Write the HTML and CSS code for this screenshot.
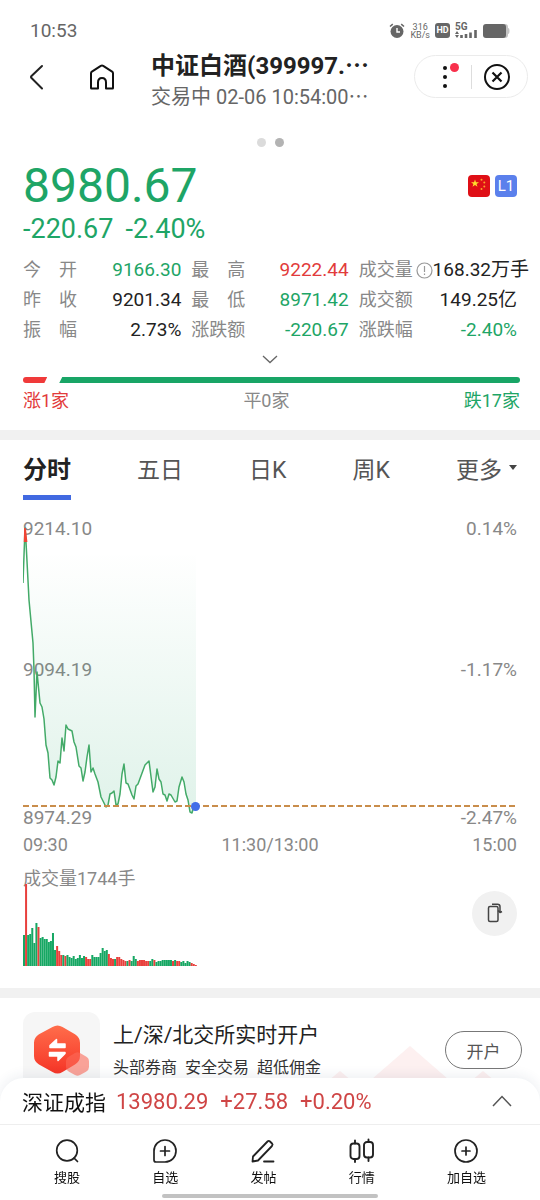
FILE: index.html
```html
<!DOCTYPE html>
<html lang="zh-CN">
<head>
	<meta charset="UTF-8">
	<meta name="viewport" content="width=device-width, initial-scale=1.0">
	<title>中证白酒</title>
	<link rel="stylesheet" href="styles.css">
</head>
<body>

	<div class="status-bar">
		<span class="time">10:53</span>
		<div class="status-icons">
			<svg width="16" height="16" viewBox="0 0 16 16">
				<circle cx="8" cy="8.500" r="6.500" fill="#666"/>
				<path d="M1 3.500L3.800 1.200M15 3.500L12.200 1.200" stroke="#666" stroke-width="1.600"/>
				<path d="M8 5v4h3" stroke="#fff" stroke-width="1.400" fill="none"/>
			</svg>
			<div class="speed"><span>316</span><span>KB/s</span></div>
			<span class="hd">HD</span>
			<div class="signal">
				<span>5G</span>
				<svg width="23" height="16" viewBox="0 0 23 16">
					<path d="M0 11l2-3 2 3zM0 12h4l-2 3z" fill="#666"/>
					<path d="M6.500 15v-3M11 15v-4M15.500 15v-5.500M20.500 15V7" stroke="#666" stroke-width="2.600"/>
				</svg>
			</div>
			<svg width="27" height="14" viewBox="0 0 27 14">
				<path d="M20 0h2q3 0 3 3v1q1.500 0 1.500 3T25 10v1q0 3-3 3h-2z" fill="#c4c4c4"/>
				<rect width="23" height="14" rx="3" fill="#666"/>
			</svg>
		</div>
	</div>

	<header class="header">
		<button class="icon-btn" aria-label="返回">
			<svg width="16" height="26" viewBox="0 0 16 26" fill="none" stroke="#222" stroke-width="2" stroke-linecap="round" stroke-linejoin="round"><path d="M14 2L3.500 12Q2.500 13 3.500 14L14 24.500"/></svg>
		</button>
		<button class="icon-btn home" aria-label="首页">
			<svg width="26" height="26" viewBox="0 0 26 26" fill="none" stroke="#111" stroke-width="2" stroke-linejoin="round"><path d="M2.500 24.500h6.500v-6q0-4.500 4-4.500t4 4.500v6h6.500q.5 0 .5-.5V9.200q0-1-.9-1.600L14.200 1.900q-1.200-.7-2.400 0L2.900 7.600q-.9.600-.9 1.600V24q0 .5.500.5z"/></svg>
		</button>
		<div class="title">
			<h1>中证白酒(399997.⋯</h1>
			<p>交易中 02-06 10:54:00⋯</p>
		</div>
		<div class="capsule">
			<button aria-label="更多选项">
				<svg width="24" height="28" viewBox="0 0 24 28"><g fill="#111"><circle cx="10" cy="5" r="2"/><circle cx="10" cy="14" r="2"/><circle cx="10" cy="23" r="2"/></g><circle cx="19.500" cy="4.500" r="4.500" fill="#f8304c"/></svg>
			</button>
			<i></i>
			<button aria-label="关闭">
				<svg width="28" height="28" viewBox="0 0 28 28" fill="none" stroke="#111" stroke-width="2"><circle cx="14" cy="14" r="12"/><path d="M9.500 9.500l9 9M18.500 9.500l-9 9" stroke-width="2.200"/></svg>
			</button>
		</div>
	</header>

	<div class="pager"><span></span><span class="on"></span></div>

	<section class="quote">
		<div class="price-row">
			<div class="price down">8980.67</div>
			<div class="badges">
				<svg width="22" height="22" viewBox="0 0 22 22">
					<rect width="22" height="22" rx="4" fill="#df0f16"/>
					<path d="M7 4.500l1 2.800h3l-2.400 1.700.9 2.800L7 10.100l-2.500 1.700.9-2.800L3 7.300h3z" fill="#fedf2c"/>
					<g fill="#f9a52a"><circle cx="13.500" cy="4.800" r="1"/><circle cx="16.300" cy="7.500" r="1"/><circle cx="16.300" cy="11.500" r="1"/><circle cx="13.500" cy="14" r="1"/></g>
				</svg>
				<span class="level">L1</span>
			</div>
		</div>
		<div class="change down"><span>-220.67</span><span>-2.40%</span></div>

		<dl class="stats">
			<div><dt><span>今</span><span>开</span></dt><dd class="down">9166.30</dd></div>
			<div><dt><span>最</span><span>高</span></dt><dd class="up">9222.44</dd></div>
			<div><dt>成交量</dt><dd class="wide"><svg width="17" height="17" viewBox="0 0 17 17" fill="none" stroke="#999" stroke-width="1.200"><circle cx="8.500" cy="8.500" r="7.500"/><path d="M8.500 4v6M8.500 11.500v1.500"/></svg>168.32万手</dd></div>
			<div><dt><span>昨</span><span>收</span></dt><dd>9201.34</dd></div>
			<div><dt><span>最</span><span>低</span></dt><dd class="down">8971.42</dd></div>
			<div><dt>成交额</dt><dd>149.25亿</dd></div>
			<div><dt><span>振</span><span>幅</span></dt><dd>2.73%</dd></div>
			<div><dt>涨跌额</dt><dd class="down">-220.67</dd></div>
			<div><dt>涨跌幅</dt><dd class="down">-2.40%</dd></div>
		</dl>

		<button class="expand" aria-label="展开">
			<svg width="16" height="9" viewBox="0 0 16 9" fill="none" stroke="#666" stroke-width="1.300"><path d="M1 1l7 6.500L15 1"/></svg>
		</button>

		<div class="breadth"><span class="bar-up"></span><span class="bar-down"></span></div>
		<div class="breadth-text"><span class="up">涨1家</span><span>平0家</span><span class="down">跌17家</span></div>
	</section>

	<section class="chart-box">
		<nav class="tabs">
			<button class="active">分时</button>
			<button>五日</button>
			<button>日K</button>
			<button>周K</button>
			<button>更多<i></i></button>
		</nav>

		<svg class="chart" viewBox="0 0 494 314">
			<defs>
				<linearGradient id="area" gradientUnits="userSpaceOnUse" x1="0" y1="35" x2="0" y2="298">
					<stop offset="0" stop-color="#1ea566" stop-opacity="0"/>
					<stop offset="1" stop-color="#1ea566" stop-opacity=".14"/>
				</linearGradient>
			</defs>
			<g class="axis">
				<text x="0" y="19">9214.10</text>
				<text x="0" y="160">9094.19</text>
				<text x="0" y="308">8974.29</text>
				<text x="494" y="19" text-anchor="end">0.14%</text>
				<text x="494" y="160" text-anchor="end">-1.17%</text>
				<text x="494" y="308" text-anchor="end">-2.47%</text>
			</g>
			<path id="fill" fill="url(#area)"/>
			<path id="line" fill="none" stroke="#43aa68" stroke-width="1.500" stroke-linejoin="round"/>
			<path d="M1.700 26L2 12L3.500 26" fill="none" stroke="#f04434" stroke-width="1.800"/>
			<path d="M0 290H494" stroke="#c98d4b" stroke-width="2" stroke-dasharray="6 3"/>
			<circle cx="172.500" cy="290.500" r="4.500" fill="#416ee8"/>
		</svg>
		<div class="times"><span>09:30</span><span>11:30/13:00</span><span>15:00</span></div>

		<div class="volume">
			<div class="volume-main">
				<p>成交量1744手</p>
				<svg id="bars" viewBox="0 0 400 83"></svg>
			</div>
			<button class="rotate" aria-label="横屏">
				<svg width="16" height="20" viewBox="0 0 16 20" fill="none" stroke="#444" stroke-width="1.500" stroke-linejoin="round"><rect x="1.500" y="3.500" width="9.500" height="15" rx="1.500"/><path d="M5 1.300h5.500q2.500 0 2.500 2.500v5M11 7.500l2 2 2-1"/></svg>
			</button>
		</div>
	</section>

	<section class="promo">
		<div class="promo-logo">
			<svg width="77" height="77" viewBox="0 0 77 77">
				<defs>
					<linearGradient id="hex" x1="0" y1="0" x2="0" y2="1"><stop offset="0" stop-color="#ff6d4b"/><stop offset="1" stop-color="#f63527"/></linearGradient>
				</defs>
				<path d="M29.500 15q5-3 10 0l12.500 7.300q5 3 5 8.500V44q0 5.500-5 8.400L39.500 60q-5 3-10 0L16 52.400q-5-3-5-8.400V30.800q0-5.500 5-8.500z" fill="url(#hex)"/>
				<path d="M52 41q2.500-1.400 5 0l6 3.500q3 1.700 3 5V55q0 3-3 4.800L57 63q-2.500 1.400-5 0l-6-3.200q-3-1.800-3-4.800v-5.500q0-3.300 3-5z" fill="#fb6a5a" fill-opacity=".6"/>
				<path d="M27 33.500l6.500-6V32H42v3.500H27zM42 41.500l-7 7V44h-8.500v-3.500H42z" fill="#fff" stroke="#fff" stroke-width="1.500" stroke-linejoin="round"/>
			</svg>
		</div>
		<div class="promo-text">
			<h2>上/深/北交所实时开户</h2>
			<p><span>头部券商</span><span>安全交易</span><span>超低佣金</span></p>
		</div>
		<button class="open">开户</button>
		<svg class="hills" width="200" height="40" viewBox="0 0 200 40">
			<path d="M100 0L146 40H54zM30 25L48 40H12zM173 25L191 40H155z" fill="#fdf0f0"/>
		</svg>
	</section>

	<footer class="footer">
		<div class="index-bar">
			<span>深证成指</span>
			<div class="index-values"><span>13980.29</span><span>+27.58</span><span>+0.20%</span></div>
			<button aria-label="展开指数">
				<svg width="20" height="12" viewBox="0 0 20 12" fill="none" stroke="#555" stroke-width="1.500"><path d="M1 11l9-9.500L19 11"/></svg>
			</button>
		</div>
		<nav class="nav">
			<button>
				<svg width="26" height="26" viewBox="0 0 26 26" fill="none" stroke="#222" stroke-width="1.700" stroke-linecap="round"><circle cx="13" cy="12.500" r="10.300"/><path d="M20 20l3.500 3.500"/></svg>
				<span>搜股</span>
			</button>
			<button>
				<svg width="26" height="26" viewBox="0 0 26 26" fill="none" stroke="#222" stroke-width="1.700" stroke-linecap="round"><path d="M2 13a11 11 0 1 1 11 11H4q-2 0-2-2zM13 8.500v9M8.500 13h9"/></svg>
				<span>自选</span>
			</button>
			<button>
				<svg width="26" height="26" viewBox="0 0 26 26" fill="none" stroke="#222" stroke-width="1.800" stroke-linecap="round" stroke-linejoin="round"><path d="M3 18.500L17.500 3.500q1.200-1.200 2.500 0l2 2q1.200 1.200 0 2.500L8 22.500l-5.500 1zM14 23.500h9.500"/></svg>
				<span>发帖</span>
			</button>
			<button>
				<svg width="26" height="26" viewBox="0 0 26 26" fill="none" stroke="#222" stroke-width="1.900" stroke-linecap="round"><rect x="1.500" y="5.500" width="9" height="15.500" rx="3"/><rect x="15" y="4" width="9" height="15.500" rx="3"/><path d="M6 2.500v3M6 21v3M19.500 1.500V4M19.500 19.500v3.500"/></svg>
				<span>行情</span>
			</button>
			<button>
				<svg width="26" height="26" viewBox="0 0 26 26" fill="none" stroke="#222" stroke-width="1.700" stroke-linecap="round"><circle cx="13" cy="13" r="11"/><path d="M13 9v8M9 13h8"/></svg>
				<span>加自选</span>
			</button>
		</nav>
		<div class="home-indicator"></div>
	</footer>

	<script src="script.js"></script>
</body>
</html>
```
FILE: styles.css
```css
* {
	margin: 0;
	padding: 0;
	box-sizing: border-box;
}

body {
	font-family: Roboto, "Noto Sans CJK SC", sans-serif;
	font-size: 18px;
	color: #222;
	background: #fff;
	overflow: hidden;
}

button {
	font: inherit;
	color: inherit;
	background: none;
	border: 0;
	cursor: pointer;
}

svg {
	display: block;
}

.up {
	color: #e23b3b;
}

.down {
	color: #1ea566;
}

/* status bar */
.status-bar {
	display: flex;
	justify-content: space-between;
	align-items: center;
	height: 52px;
	padding: 9px 30px 0;
	color: #666;
}

.time {
	font-size: 19px;
}

.status-icons {
	display: flex;
	align-items: center;
	gap: 5px;
}

.speed {
	display: flex;
	flex-direction: column;
	align-items: center;
	font-size: 9px;
	line-height: 8px;
}

.hd {
	width: 15px;
	height: 15px;
	border-radius: 3px;
	background: #666;
	color: #fff;
	font-size: 9px;
	font-weight: 700;
	line-height: 15px;
	text-align: center;
}

.signal {
	display: grid;
}

.signal > * {
	grid-area: 1 / 1;
}

.signal span {
	font-size: 10px;
	font-weight: 700;
	line-height: 8px;
}

/* header */
.header {
	display: flex;
	align-items: center;
	height: 49px;
	padding: 0 12px 0 28px;
}

.icon-btn {
	flex: none;
}

.home {
	margin: 0 36px 0 45px;
}

.title {
	flex: 1;
	padding-top: 8px;
	white-space: nowrap;
}

.title h1 {
	font-size: 24px;
	font-weight: 700;
	line-height: 32px;
}

.title p {
	font-size: 20px;
	line-height: 30px;
	color: #666;
}

.capsule {
	display: flex;
	align-items: center;
	justify-content: space-between;
	width: 114px;
	height: 43px;
	padding: 0 16px 0 20px;
	border: 1px solid #ebebeb;
	border-radius: 22px;
}

.capsule i {
	width: 1px;
	height: 24px;
	background: #ddd;
}

.pager {
	display: flex;
	justify-content: center;
	gap: 9px;
	padding: 37px 0 14px;
}

.pager span {
	width: 9px;
	height: 9px;
	border-radius: 50%;
	background: #dbdbdb;
}

.pager .on {
	background: #b3b3b3;
}

/* quote */
.quote {
	padding: 0 23px 15px;
	border-bottom: 10px solid #f1f1f1;
}

.price-row {
	display: flex;
	justify-content: space-between;
	align-items: center;
}

.price {
	font-size: 48px;
	line-height: 50px;
}

.badges {
	display: flex;
	gap: 5px;
}

.level {
	width: 22px;
	height: 22px;
	border-radius: 4px;
	background: #5b80ec;
	color: #fff;
	font-size: 15px;
	line-height: 22px;
	text-align: center;
}

.change {
	display: flex;
	gap: 12px;
	font-size: 27px;
	line-height: 36px;
	padding-bottom: 8px;
}

.stats {
	display: grid;
	grid-template-columns: 158fr 157fr 158fr;
	column-gap: 10px;
	line-height: 30px;
}

.stats div {
	display: flex;
	justify-content: space-between;
	min-width: 0;
}

.stats dt {
	display: flex;
	justify-content: space-between;
	flex: none;
	width: 54px;
	color: #888;
}

.stats dd {
	font-size: 19px;
	white-space: nowrap;
}

.stats .wide {
	display: flex;
	align-items: center;
	margin-right: -12px;
}

.expand {
	display: block;
	margin: 10px auto 13px;
}

.breadth {
	display: flex;
	gap: 12px;
	height: 6px;
	margin-right: -3px;
}

.bar-up {
	flex: 1;
	background: #f03a3a;
	border-radius: 3px 0 0 3px;
	clip-path: polygon(0 0, 100% 0, 88% 100%, 0 100%);
}

.bar-down {
	flex: 19;
	background: #18a566;
	border-radius: 0 3px 3px 0;
	clip-path: polygon(3px 0, 100% 0, 100% 100%, 0 100%);
}

.breadth-text {
	display: flex;
	justify-content: space-between;
	margin-right: -3px;
	padding-top: 4px;
	line-height: 28px;
	color: #888;
}

/* chart */
.chart-box {
	padding: 0 23px 22px;
	border-bottom: 10px solid #f1f1f1;
}

.tabs {
	display: flex;
	justify-content: space-between;
	font-size: 23px;
	color: #555;
	padding-bottom: 16px;
}

.tabs button {
	display: flex;
	align-items: center;
	height: 60px;
	border-bottom: 5px solid transparent;
}

.tabs .active {
	font-size: 24px;
	font-weight: 700;
	color: #222;
	border-color: #4169e1;
}

.tabs i {
	margin-left: 7px;
	border: 4px solid transparent;
	border-top: 5px solid #444;
	border-bottom: 0;
}

.chart {
	width: 100%;
	height: auto;
}

.axis text {
	font-size: 19px;
	fill: #888;
}

.times {
	display: flex;
	justify-content: space-between;
	line-height: 30px;
	color: #888;
}

.volume {
	display: flex;
	justify-content: space-between;
	align-items: center;
}

.volume-main {
	flex: 1;
}

.volume p {
	line-height: 24px;
	color: #888;
	padding-top: 7px;
}

#bars {
	width: 400px;
	height: 83px;
	margin-top: -8px;
}

.rotate {
	display: flex;
	align-items: center;
	justify-content: center;
	width: 45px;
	height: 45px;
	border-radius: 50%;
	background: #f1f1f1;
}

/* promo */
.promo {
	position: relative;
	display: flex;
	align-items: flex-start;
	padding: 14px 18px 0 23px;
}

.promo-logo {
	border-radius: 12px;
	background: #f6f6f6;
}

.promo-text {
	flex: 1;
	padding-left: 13px;
}

.promo-text h2 {
	font-size: 21px;
	font-weight: 400;
	line-height: 46px;
}

.promo-text p {
	display: flex;
	gap: 8px;
	font-size: 16px;
	line-height: 20px;
	color: #333;
}

.open {
	width: 77px;
	height: 38px;
	margin-top: 19px;
	border: 1px solid #777;
	border-radius: 19px;
	font-size: 17px;
	color: #555;
}

.hills {
	position: absolute;
	right: 30px;
	top: 48px;
	z-index: -1;
}

/* footer */
.footer {
	position: fixed;
	left: 0;
	right: 0;
	bottom: 0;
	background: #fff;
	border-radius: 24px 24px 0 0;
	box-shadow: 0 -3px 12px rgba(40, 60, 100, 0.08);
}

.index-bar {
	display: flex;
	align-items: center;
	height: 47px;
	padding: 0 28px 0 22px;
	border-bottom: 1px solid #eee;
	font-size: 21px;
	color: #111;
}

.index-values {
	display: flex;
	flex: 1;
	gap: 12px;
	padding-left: 10px;
	font-size: 22px;
	color: #cf4545;
}

.nav {
	display: flex;
	justify-content: space-between;
	padding: 13px 54px 6px;
	font-size: 13px;
	color: #111;
}

.nav button {
	display: flex;
	flex-direction: column;
	align-items: center;
	gap: 4px;
	line-height: 20px;
}

.home-indicator {
	width: 40%;
	height: 4px;
	margin: 0 auto 2px;
	border-radius: 2px;
	background: #c2c2c2;
}
```
FILE: script.js
```js
// minute prices as chart points
const points = [
	[0, 67], [2, 12], [3, 26], [6, 84], [10, 127], [11, 154], [12, 201], [14, 156], [17, 187], [19, 191],
	[21, 203], [23, 229], [25, 237], [27, 262], [29, 264], [31, 269], [33, 261], [35, 245], [37, 247],
	[39, 222], [41, 235], [43, 209], [45, 213], [49, 215], [51, 226], [53, 231], [56, 250], [58, 252],
	[60, 265], [62, 256], [64, 241], [66, 229], [68, 256], [70, 252], [72, 258], [75, 266], [78, 281],
	[80, 285], [83, 291], [85, 289], [87, 278], [89, 277], [91, 275], [93, 289], [95, 288], [97, 278],
	[99, 258], [101, 248], [103, 267], [105, 268], [109, 279], [111, 283], [113, 270], [115, 268],
	[122, 249], [124, 247], [126, 245], [130, 276], [132, 271], [134, 253], [136, 263], [138, 266],
	[140, 278], [142, 279], [144, 285], [146, 278], [148, 279], [152, 286], [154, 285], [156, 271],
	[159, 261], [161, 266], [163, 278], [165, 284], [167, 296], [169, 297], [170, 293], [173, 291]
];
const line = 'M' + points.map(p => p.join(' ')).join('L');
document.getElementById('line').setAttribute('d', line);
document.getElementById('fill').setAttribute('d', line + 'V12H2Z');

// volume: height and direction of each minute
const heights = [
	31, 82, 31, 32, 38, 23, 43, 39, 28, 29, 27, 27, 24, 25, 33, 16, 20, 15, 11, 11, 10,
	11, 9, 8, 10, 7, 8, 11, 8, 10, 9, 7, 7, 11, 9, 9, 9, 13, 18, 15, 16,
	12, 8, 7, 7, 9, 9, 7, 6, 5, 5, 6, 5, 10, 7, 5, 6, 6, 6, 5, 5,
	5, 7, 6, 4, 5, 5, 6, 6, 6, 6, 6, 5, 6, 5, 5, 4, 5, 3, 5, 4, 3, 2, 1
];
const dirs = 'grgggggrgggggggg' + 'rrrgrgggggggggrrrggggggggrrrgrrrrrgrgggr' + 'rrrrrggrggggggggrgrrgggggrrr';
let bars = '';
heights.forEach((h, i) => {
	const color = dirs[i] === 'r' ? '#e8403c' : '#16a763';
	bars += `<rect x="${i * 2.07}" y="${83 - h}" width="2" height="${h}" fill="${color}"/>`;
});
document.getElementById('bars').innerHTML = bars;
```
